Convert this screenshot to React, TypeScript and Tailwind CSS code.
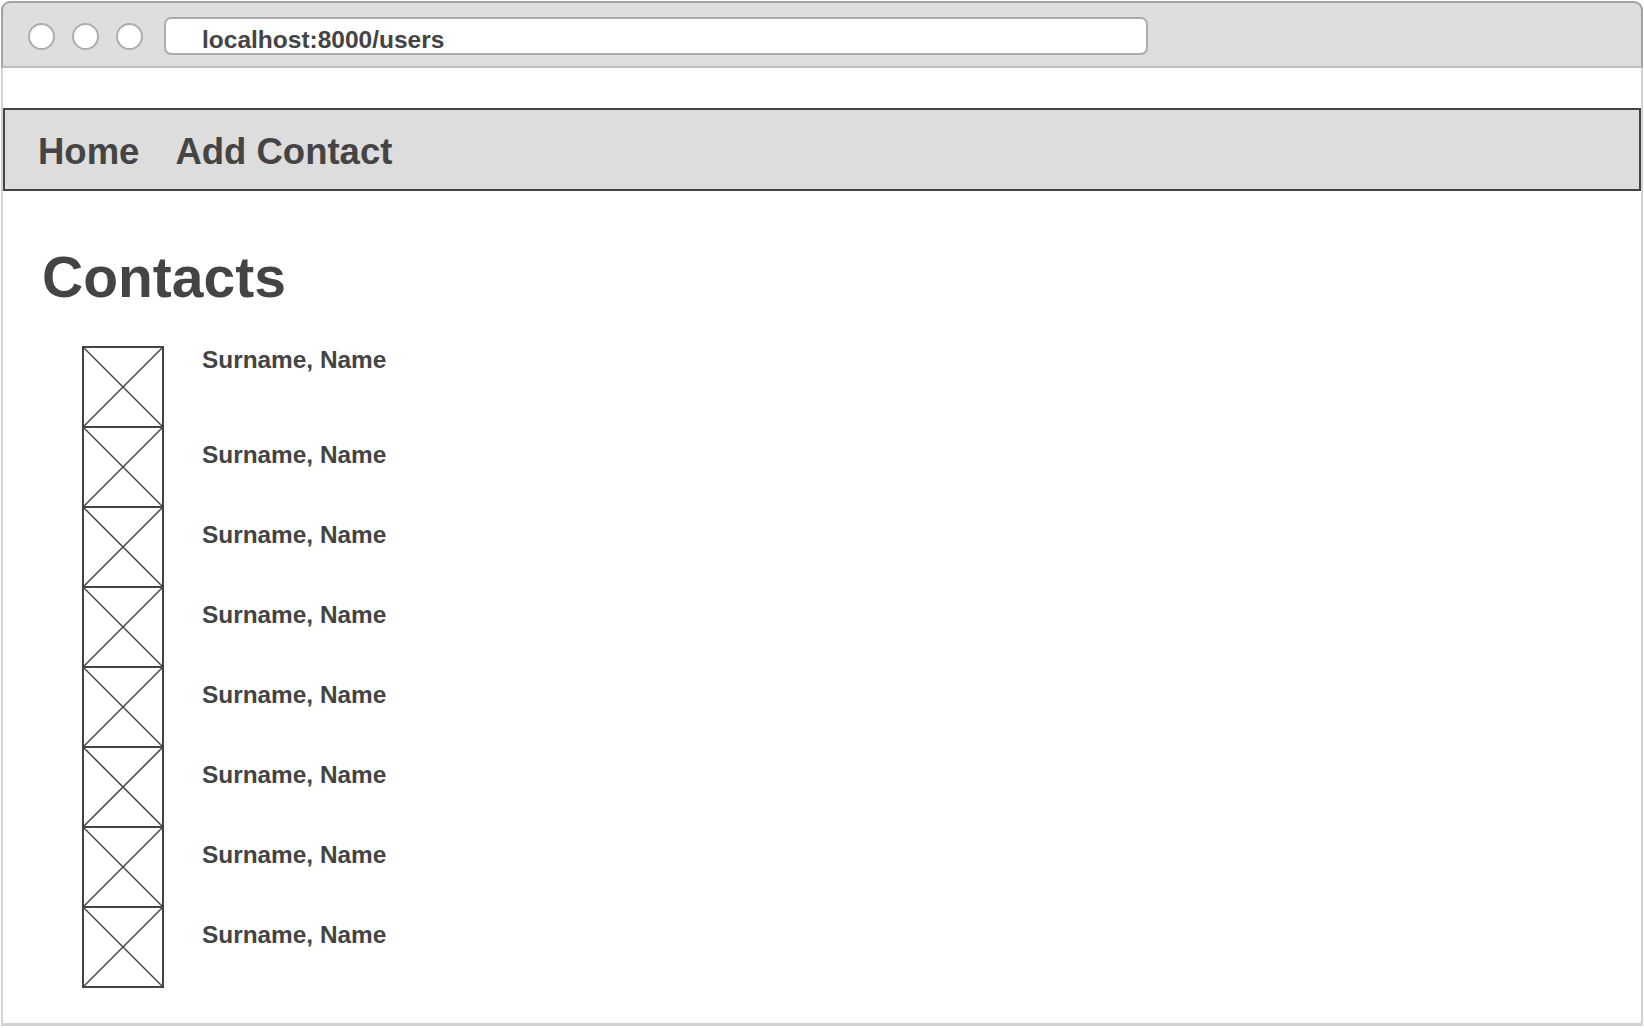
export default function App() {
  const contacts = Array.from({ length: 8 }, (_, i) => ({ id: i, label: 'Surname, Name' }));

  return (
    <div
      className="w-[1644px] h-[1028px] bg-white pt-[1px] pl-[1px] overflow-hidden text-[#444444]"
      style={{ fontFamily: '"Liberation Sans", Arial, Helvetica, sans-serif' }}
    >
      <div className="w-[1642px] h-[1025px] flex flex-col">
        {/* Browser chrome */}
        <div className="h-[67px] shrink-0 bg-[#dedede] border-t-2 border-x-2 border-b-2 border-t-[#a3a3a3] border-x-[#a3a3a3] border-b-[#bfbfbf] rounded-t-[9px] flex items-start pt-[14px] pl-[25px]">
          <div className="flex gap-[17px] mt-[6px]">
            <div className="w-[27px] h-[27px] rounded-full bg-white border-2 border-[#adadad]" />
            <div className="w-[27px] h-[27px] rounded-full bg-white border-2 border-[#adadad]" />
            <div className="w-[27px] h-[27px] rounded-full bg-white border-2 border-[#adadad]" />
          </div>
          <div className="ml-[21px] w-[984px] h-[38px] bg-white border-2 border-[#acacac] rounded-[7px] pl-[36px] pt-[9px]">
            <span className="block text-[24.5px] leading-[24px] font-bold">localhost:8000/users</span>
          </div>
        </div>

        {/* Page */}
        <div className="flex-1 border-x-2 border-b-[3px] border-[#d3d3d3]">
          <nav className="mt-[40px] h-[83px] border-2 border-[#444444] bg-[#dddddd] pt-[24px] pl-[33px] flex gap-[36px]">
            <a className="text-[36.5px] leading-[36px] font-bold">Home</a>
            <a className="text-[36.5px] leading-[36px] font-bold">Add Contact</a>
          </nav>

          <h1 className="mt-[58px] pl-[39px] text-[57px] leading-[56px] font-bold">Contacts</h1>

          <ul className="mt-[41px] pl-[79px]">
            {contacts.map((c, idx) => (
              <li key={c.id} className="flex h-[80px]">
                <svg width="82" height="82" viewBox="0 0 82 82" className="shrink-0">
                  <rect x="1" y="1" width="80" height="80" fill="white" stroke="#444444" strokeWidth="2" />
                  <line x1="2" y1="2" x2="80" y2="80" stroke="#444444" strokeWidth="1.5" />
                  <line x1="80" y1="2" x2="2" y2="80" stroke="#444444" strokeWidth="1.5" />
                </svg>
                <span
                  className={
                    idx === 0
                      ? 'ml-[38px] mt-[2px] text-[24.4px] leading-[24px] font-bold'
                      : 'ml-[38px] mt-[17px] text-[24.4px] leading-[24px] font-bold'
                  }
                >
                  {c.label}
                </span>
              </li>
            ))}
          </ul>
        </div>
      </div>
    </div>
  );
}
